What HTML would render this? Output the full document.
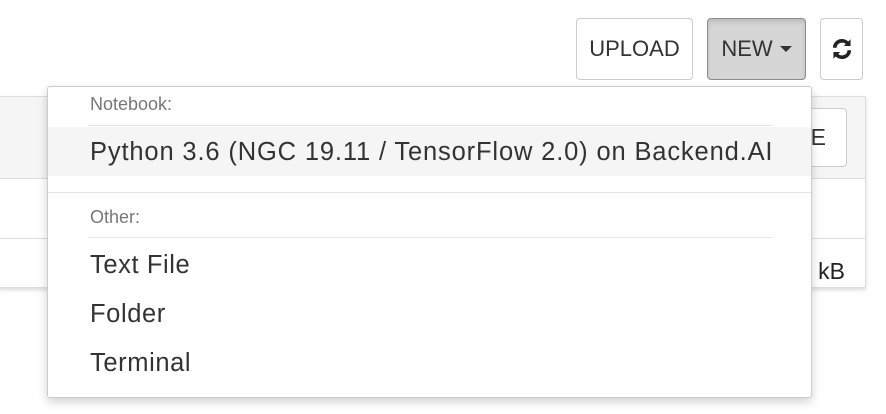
<!DOCTYPE html>
<html><head><meta charset="utf-8"><style>
body{margin:0;width:886px;height:414px;background:#fff;font-family:"Liberation Sans",Arial,sans-serif;position:relative;overflow:hidden;color:#333}
.btn{position:absolute;box-sizing:border-box;border:1px solid #ccc;border-radius:4px;background:#fff;font-size:22px;display:flex;align-items:center;justify-content:center;color:#333}
.panel{position:absolute;left:-2px;top:96px;width:868px;height:192px;border:1px solid #ddd;box-sizing:border-box;box-shadow:0 2px 4px rgba(0,0,0,.15)}
.dd{position:absolute;left:47px;top:86px;width:765px;height:312px;box-sizing:border-box;border:1px solid #ccc;border-radius:3px;background:#fff;box-shadow:0 4px 10px rgba(0,0,0,.18)}
.hdr{position:absolute;left:42px;font-size:18px;color:#777}
.it{position:absolute;left:42px;font-size:25.5px;letter-spacing:0.6px;color:#333;line-height:28px}
.ln{position:absolute;height:1px;background:#e5e5e5}
</style></head><body>
<div class="btn" style="left:576px;top:18px;width:117px;height:62px">UPLOAD</div>
<div class="btn" style="left:707px;top:18px;width:99px;height:62px;background:#d6d6d6;border-color:#8c8c8c;box-shadow:inset 0 3px 5px rgba(0,0,0,.12)">NEW<span style="display:inline-block;margin-left:7px;border-left:6px solid transparent;border-right:6px solid transparent;border-top:6px solid #333"></span></div>
<div class="btn" style="left:820px;top:18px;width:43px;height:62px">
<svg width="22" height="22" viewBox="0 0 18 18"><path d="M3 8 A6 6 0 0 1 14 5" fill="none" stroke="#222" stroke-width="3"/><path d="M10.5 6.5 L16 6.5 L16 1 Z" fill="#222"/><path d="M15 10 A6 6 0 0 1 4 13" fill="none" stroke="#222" stroke-width="3"/><path d="M7.5 11.5 L2 11.5 L2 17 Z" fill="#222"/></svg></div>
<div class="panel">
<div style="position:absolute;left:0;top:0;right:0;height:81px;background:#f5f5f5;border-bottom:1px solid #ddd"></div>
<div style="position:absolute;left:0;right:0;top:141px;height:1px;background:#ddd"></div>
<div class="btn" style="left:780px;top:11px;width:68px;height:59px;font-size:23px;justify-content:flex-end;padding-right:20px">E</div>
<div style="position:absolute;left:800px;top:161px;font-size:23px;color:#222">3 kB</div>
</div>
<div class="dd">
<div class="hdr" style="top:7px">Notebook:</div>
<div class="ln" style="left:40px;width:685px;top:38px"></div>
<div style="position:absolute;left:0;right:0;top:40px;height:49px;background:#f5f5f5"></div>
<div class="it" style="top:51px;letter-spacing:0.85px;white-space:nowrap">Python 3.6 (NGC 19.11 / TensorFlow 2.0) on Backend.AI</div>
<div class="ln" style="left:0;right:0;top:105px"></div>
<div class="hdr" style="top:120px">Other:</div>
<div class="ln" style="left:40px;width:685px;top:150px"></div>
<div class="it" style="top:164px">Text File</div>
<div class="it" style="top:213px">Folder</div>
<div class="it" style="top:262px">Terminal</div>
</div>
</body></html>
